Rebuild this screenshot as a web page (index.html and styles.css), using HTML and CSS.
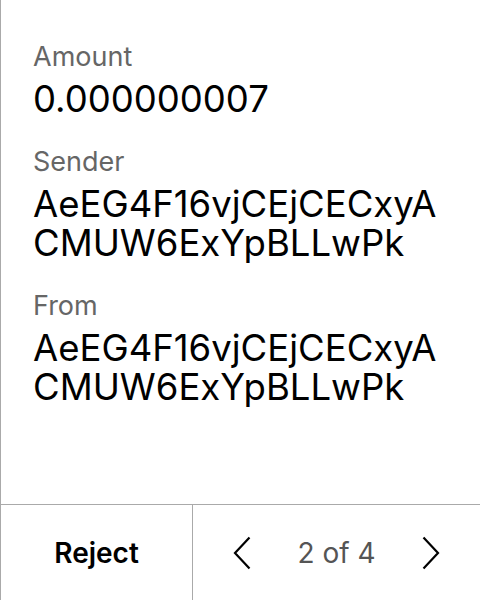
FILE: index.html
```html
<!DOCTYPE html>
<html>
<head>
<meta charset="utf-8">
<link rel="stylesheet" href="styles.css">
</head>
<body>
<div class="screen">
  <div class="content">
    <div class="field">
      <div class="label">Amount</div>
      <div class="value">0.000000007</div>
    </div>
    <div class="field">
      <div class="label">Sender</div>
      <div class="value">AeEG4F16vjCEjCECxyA<br>CMUW6ExYpBLLwPk</div>
    </div>
    <div class="field">
      <div class="label">From</div>
      <div class="value">AeEG4F16vjCEjCECxyA<br>CMUW6ExYpBLLwPk</div>
    </div>
  </div>
  <div class="footer">
    <div class="reject">Reject</div>
    <div class="pager">
      <svg class="chev" width="18" height="34" viewBox="0 0 18 34"><path d="M16.5 1.5 L2 17 L16.5 32.5" fill="none" stroke="#000" stroke-width="2.2"/></svg>
      <span class="count">2 of 4</span>
      <svg class="chev" width="18" height="34" viewBox="0 0 18 34"><path d="M1.5 1.5 L16 17 L1.5 32.5" fill="none" stroke="#000" stroke-width="2.2"/></svg>
    </div>
  </div>
</div>
</body>
</html>
```
FILE: styles.css
```css
html, body {
  margin: 0;
  padding: 0;
  background: #fff;
}
body {
  font-family: Inter, "Noto Sans", sans-serif;
}
.screen {
  width: 480px;
  height: 600px;
  box-sizing: border-box;
  border-left: 1px solid #aaa;
  display: flex;
  flex-direction: column;
}
.content {
  flex: 1;
  padding: 41px 0 0 32px;
}
.field {
  margin-bottom: 27px;
}
.label {
  font-size: 27px;
  line-height: 31px;
  color: #666;
  margin-bottom: 8px;
}
.value {
  font-size: 36.5px;
  line-height: 39px;
  color: #000;
}
.footer {
  height: 95px;
  border-top: 1px solid #aaa;
  display: flex;
}
.reject {
  width: 191px;
  border-right: 1px solid #aaa;
  display: flex;
  align-items: center;
  justify-content: center;
  font-size: 28px;
  font-weight: 600;
  color: #000;
}
.pager {
  flex: 1;
  display: flex;
  align-items: center;
  justify-content: center;
  gap: 46px;
}
.count {
  font-size: 28px;
  color: #555;
}
.chev {
  display: block;
}
```
